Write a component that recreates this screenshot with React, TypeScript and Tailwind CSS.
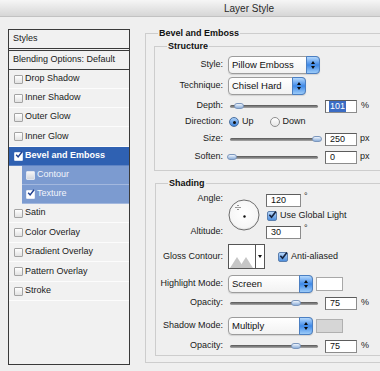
import React from "react";

type Item = { label: string; h: string; sel?: boolean; sub?: boolean; checked?: boolean };

const items: Item[] = [
  { label: "Drop Shadow", h: "h-[19px]" },
  { label: "Inner Shadow", h: "h-[19px]" },
  { label: "Outer Glow", h: "h-[19px]" },
  { label: "Inner Glow", h: "h-[20px]" },
  { label: "Bevel and Emboss", h: "h-[19px]", sel: true, checked: true },
  { label: "Contour", h: "h-[19px]", sub: true },
  { label: "Texture", h: "h-[19px]", sub: true, checked: true },
  { label: "Satin", h: "h-[19px]" },
  { label: "Color Overlay", h: "h-[20px]" },
  { label: "Gradient Overlay", h: "h-[19px]" },
  { label: "Pattern Overlay", h: "h-[20px]" },
  { label: "Stroke", h: "h-[19px]" },
];

function CheckMark({ color = "#1e3f8f" }: { color?: string }) {
  return (
    <svg width="10" height="10" viewBox="0 0 10 10" className="-mt-[2px] -mr-[1px]">
      <path d="M1.5 4.8 L3.9 7.4 L8.8 1" fill="none" stroke={color} strokeWidth="1.8" />
    </svg>
  );
}

function ListCheck({ checked = false, variant = "normal" }: { checked?: boolean; variant?: "normal" | "sel" | "sub" }) {
  const base =
    variant === "normal"
      ? "border-[#a3a3a3] bg-gradient-to-b from-[#ffffff] to-[#e2e2e2]"
      : variant === "sel"
      ? "border-[#d8e2f3] bg-white"
      : checked
      ? "border-[#e6ecf7] bg-white"
      : "border-[#dfe5f0] bg-gradient-to-b from-[#f6f6f6] to-[#d3d7de]";
  return (
    <span className={`w-[9px] h-[9px] border rounded-[1px] shrink-0 flex items-center justify-center ${base}`}>
      {checked && <CheckMark />}
    </span>
  );
}

function Select({ text, w }: { text: string; w: string }) {
  return (
    <div className={`${w} h-[18px] flex rounded-[4px] border border-[#9c9c9c] bg-gradient-to-b from-white to-[#f2f2f2] shadow-[0_1px_1px_rgba(0,0,0,0.12)]`}>
      <span className="flex-1 flex items-center pl-[3px] text-[9.5px] text-[#111]">{text}</span>
      <span className="w-[14px] my-[-1px] mr-[-1px] rounded-r-[4px] border border-[#4b7fc2] bg-gradient-to-b from-[#b4d8fc] via-[#3d88e6] to-[#9ccbf8] flex flex-col items-center justify-center gap-[2px]">
        <span className="w-0 h-0 border-x-[2.5px] border-x-transparent border-b-[3px] border-b-[#0b0b0b]" />
        <span className="w-0 h-0 border-x-[2.5px] border-x-transparent border-t-[3px] border-t-[#0b0b0b]" />
      </span>
    </div>
  );
}

function Slider({ pos }: { pos: number }) {
  return (
    <div className="relative w-[88px] h-[9px] flex items-center shrink-0">
      <div className="w-full h-[3px] rounded-full bg-gradient-to-b from-[#555] to-[#aaa]" />
      <div
        className="absolute top-[1.5px] w-[10px] h-[6px] -ml-[5px] rounded-full border border-[#7c97bd] bg-gradient-to-b from-[#eef4fc] to-[#8fb0da]"
        style={{ left: `${pos}px` }}
      />
    </div>
  );
}

function Num({ v, sel = false, w = "w-[32px]" }: { v: string; sel?: boolean; w?: string }) {
  return (
    <div className={`${w} h-[13px] shrink-0 border border-[#8c8c8c] border-t-[#5c5c5c] border-l-[#6c6c6c] bg-white flex items-center pl-[4px] text-[9px] leading-none text-[#111]`}>
      {sel ? <span className="bg-[#3b6cc4] text-white px-[1px] -ml-[1px] py-[1px]">{v}</span> : v}
    </div>
  );
}

function Label({ children, w }: { children: React.ReactNode; w: string }) {
  return <div className={`${w} shrink-0 text-right text-[9px] text-[#1a1a1a]`}>{children}</div>;
}

function BlueCheck() {
  return (
    <span className="w-[10px] h-[10px] shrink-0 rounded-[2px] border border-[#5b7fae] bg-gradient-to-b from-[#b7d7fb] to-[#4d8edc] flex items-center justify-center">
      <CheckMark color="#15233f" />
    </span>
  );
}

function Radio({ on }: { on: boolean }) {
  return on ? (
    <span className="w-[10px] h-[10px] shrink-0 rounded-full border border-[#4a6f9f] bg-gradient-to-b from-[#a9cff8] to-[#3f84dc] flex items-center justify-center">
      <span className="w-[3px] h-[3px] rounded-full bg-[#111]" />
    </span>
  ) : (
    <span className="block w-[10px] h-[10px] shrink-0 rounded-full border border-[#8e8e8e] bg-gradient-to-b from-white to-[#e6e6e6]" />
  );
}

function Group({ title, className, children }: { title: string; className: string; children: React.ReactNode }) {
  return (
    <div className={`relative border-l border-t border-b border-[#cdcdcd] ${className}`}>
      <span className="absolute left-[12px] top-[-7px] bg-[#efefef] px-[1px] text-[9px] leading-[12px] font-bold text-[#111]">{title}</span>
      {children}
    </div>
  );
}

export default function App() {
  return (
    <div className="w-[380px] h-[371px] overflow-hidden bg-[#efefef] font-['Liberation_Sans',Arial,sans-serif] text-[#1a1a1a]">
      {/* Title bar */}
      <div className="h-[17px] flex items-center justify-center pl-[118px] bg-gradient-to-b from-[#f6f6f6] to-[#d6d6d6] border-b border-[#c2c2c2] text-[10px] text-[#2a2a2a]">
        Layer Style
      </div>

      <div className="flex">
        {/* Left list */}
        <div className="mt-[12px] ml-[8px] w-[122px] h-[336px] shrink-0 border border-[#3a3a3a] bg-[#f1f1f1] flex flex-col text-[9px]">
          <div className="h-[19px] flex items-center pl-[4px] border-b border-[#3a3a3a]">Styles</div>
          <div className="h-[2px] border-b border-[#3a3a3a]" />
          <div className="h-[19px] flex items-center pl-[4px] border-b border-[#3a3a3a]">Blending Options: Default</div>
          {items.map((it) =>
            it.sel ? (
              <div key={it.label} className={`${it.h} flex items-center gap-[2px] pl-[5px] bg-[#2f61b2] border-b border-[#5f84c4] text-white font-bold`}>
                <ListCheck checked variant="sel" />
                <span>{it.label}</span>
              </div>
            ) : it.sub ? (
              <div key={it.label} className={`${it.h} ml-[13px] flex items-center gap-[2px] pl-[4px] bg-[#7c9bd0] border-b border-[#a3b8de] text-[#f2f5fb]`}>
                <ListCheck checked={it.checked} variant="sub" />
                <span>{it.label}</span>
              </div>
            ) : (
              <div key={it.label} className={`${it.h} flex items-center gap-[2px] pl-[5px] border-b border-[#fcfcfc]`}>
                <ListCheck />
                <span>{it.label}</span>
              </div>
            )
          )}
        </div>

        {/* Right panel */}
        <Group title="Bevel and Emboss" className="mt-[16px] ml-[15px] flex-1 h-[330px]">
          <Group title="Structure" className="ml-[8px] mt-[12px] h-[125px]">
            <div className="pt-[9px] flex flex-col">
              <div className="h-[18px] flex items-center">
                <Label w="w-[68px]">Style:</Label>
                <div className="ml-[5px]"><Select text="Pillow Emboss" w="w-[92px]" /></div>
              </div>
              <div className="mt-[3px] h-[18px] flex items-center">
                <Label w="w-[68px]">Technique:</Label>
                <div className="ml-[5px]"><Select text="Chisel Hard" w="w-[78px]" /></div>
              </div>
              <div className="mt-[3px] h-[16px] flex items-center">
                <Label w="w-[68px]">Depth:</Label>
                <div className="ml-[7px]"><Slider pos={9} /></div>
                <div className="ml-[7px]"><Num v="101" sel /></div>
                <span className="ml-[4px] text-[9px]">%</span>
              </div>
              <div className="h-[16px] flex items-center">
                <Label w="w-[68px]">Direction:</Label>
                <div className="ml-[6px] flex items-center">
                  <Radio on />
                  <span className="ml-[3px] text-[9px]">Up</span>
                  <span className="ml-[16px]"><Radio on={false} /></span>
                  <span className="ml-[3px] text-[9px]">Down</span>
                </div>
              </div>
              <div className="mt-[1px] h-[16px] flex items-center">
                <Label w="w-[68px]">Size:</Label>
                <div className="ml-[7px]"><Slider pos={87} /></div>
                <div className="ml-[7px]"><Num v="250" /></div>
                <span className="ml-[3px] text-[9px]">px</span>
              </div>
              <div className="mt-[2px] h-[16px] flex items-center">
                <Label w="w-[68px]">Soften:</Label>
                <div className="ml-[7px]"><Slider pos={2} /></div>
                <div className="ml-[7px]"><Num v="0" /></div>
                <span className="ml-[3px] text-[9px]">px</span>
              </div>
            </div>
          </Group>

          <Group title="Shading" className="ml-[9px] mt-[12px] h-[173px]">
            <div className="pt-[10px] flex flex-col">
              <div className="flex">
                <div className="w-[67px] shrink-0 flex flex-col text-right text-[9px]">
                  <span className="-mt-[2px] leading-[12px]">Angle:</span>
                  <span className="mt-[21px] leading-[12px]">Altitude:</span>
                </div>
                <svg width="32" height="32" viewBox="0 0 32 32" className="ml-[5px] mt-[5px] shrink-0">
                  <defs>
                    <radialGradient id="dial" cx="50%" cy="45%" r="55%">
                      <stop offset="0%" stopColor="#ffffff" />
                      <stop offset="85%" stopColor="#f6f6f6" />
                      <stop offset="100%" stopColor="#dcdcdc" />
                    </radialGradient>
                  </defs>
                  <circle cx="16" cy="16" r="15" fill="url(#dial)" stroke="#6d6d6d" strokeWidth="1" />
                  <circle cx="16.5" cy="17.5" r="1.2" fill="#111" />
                  <rect x="9.5" y="6" width="1" height="1" fill="#333" />
                  <rect x="9.5" y="10" width="1" height="1" fill="#333" />
                  <rect x="7.5" y="8" width="1" height="1" fill="#333" />
                  <rect x="11.5" y="8" width="1" height="1" fill="#333" />
                  <rect x="9.5" y="8" width="1" height="1" fill="#555" />
                </svg>
                <div className="ml-[6px] flex flex-col">
                  <div className="h-[13px] flex items-start">
                    <Num v="120" w="w-[35px]" />
                    <span className="ml-[3px] -mt-[2px] text-[9px] leading-none">°</span>
                  </div>
                  <div className="mt-[3px] h-[12px] flex items-center">
                    <span className="ml-[1px]"><BlueCheck /></span>
                    <span className="ml-[3px] text-[9px]">Use Global Light</span>
                  </div>
                  <div className="mt-[4px] h-[13px] flex items-start">
                    <Num v="30" w="w-[35px]" />
                    <span className="ml-[3px] -mt-[2px] text-[9px] leading-none">°</span>
                  </div>
                </div>
              </div>

              <div className="mt-[5px] h-[25px] flex items-center">
                <Label w="w-[67px]">Gloss Contour:</Label>
                <div className="ml-[5px] w-[37px] h-[25px] shrink-0 flex border border-[#555] bg-white">
                  <svg width="26" height="23" viewBox="0 0 26 23" className="shrink-0">
                    <polygon points="1,23 8,12 15,23" fill="#c6c6c6" />
                    <polygon points="10,23 17,12 24,23" fill="#c6c6c6" />
                  </svg>
                  <div className="flex-1 border-l border-[#555] flex items-center justify-center">
                    <span className="w-0 h-0 border-x-[2.5px] border-x-transparent border-t-[3px] border-t-[#111]" />
                  </div>
                </div>
                <div className="ml-[13px] self-start mt-[6px] flex items-center">
                  <BlueCheck />
                  <span className="ml-[3px] text-[9px]">Anti-aliased</span>
                </div>
              </div>

              <div className="mt-[6px] h-[18px] flex items-center">
                <Label w="w-[67px]">Highlight Mode:</Label>
                <div className="ml-[5px]"><Select text="Screen" w="w-[85px]" /></div>
                <div className="ml-[3px] w-[27px] h-[14px] shrink-0 border border-[#a8a8a8] bg-white" />
              </div>
              <div className="mt-[3px] h-[14px] flex items-center">
                <Label w="w-[67px]">Opacity:</Label>
                <div className="ml-[7px]"><Slider pos={66} /></div>
                <div className="ml-[7px]"><Num v="75" /></div>
                <span className="ml-[4px] text-[9px]">%</span>
              </div>
              <div className="mt-[7px] h-[18px] flex items-center">
                <Label w="w-[67px]">Shadow Mode:</Label>
                <div className="ml-[5px]"><Select text="Multiply" w="w-[85px]" /></div>
                <div className="ml-[3px] w-[27px] h-[14px] shrink-0 border border-[#b0b0b0] bg-[#d6d6d6]" />
              </div>
              <div className="mt-[4px] h-[14px] flex items-center">
                <Label w="w-[67px]">Opacity:</Label>
                <div className="ml-[7px]"><Slider pos={66} /></div>
                <div className="ml-[7px]"><Num v="75" /></div>
                <span className="ml-[4px] text-[9px]">%</span>
              </div>
            </div>
          </Group>
        </Group>
      </div>
    </div>
  );
}
